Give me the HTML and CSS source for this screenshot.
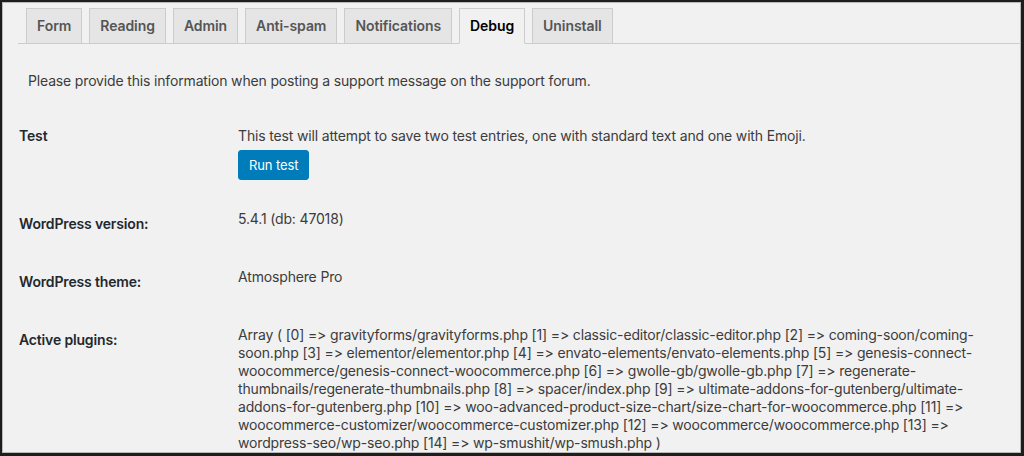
FILE: index.html
```html
<!DOCTYPE html>
<html lang="en">
<head>
  <meta charset="UTF-8" />
  <meta name="viewport" content="width=device-width, initial-scale=1.0" />
  <title>Debug</title>
  <link rel="stylesheet" href="styles.css">
</head>
<body>
  <div class="frame">
    <nav class="tabs">
      <a class="tab" href="#">Form</a>
      <a class="tab" href="#">Reading</a>
      <a class="tab" href="#">Admin</a>
      <a class="tab" href="#">Anti-spam</a>
      <a class="tab" href="#">Notifications</a>
      <a class="tab active" href="#">Debug</a>
      <a class="tab" href="#">Uninstall</a>
    </nav>

    <p class="intro">Please provide this information when posting a support message on the support forum.</p>

    <table class="debug-table">
      <tr>
        <th>Test</th>
        <td>
          <p class="test-desc">This test will attempt to save two test entries, one with standard text and one with Emoji.</p>
          <button class="btn-primary">Run test</button>
        </td>
      </tr>
      <tr>
        <th>WordPress version:</th>
        <td>5.4.1 (db: 47018)</td>
      </tr>
      <tr>
        <th>WordPress theme:</th>
        <td>Atmosphere Pro</td>
      </tr>
      <tr>
        <th>Active plugins:</th>
        <td>Array ( [0] =&gt; gravityforms/gravityforms.php [1] =&gt; classic-editor/classic-editor.php [2] =&gt; coming-soon/coming-soon.php [3] =&gt; elementor/elementor.php [4] =&gt; envato-elements/envato-elements.php [5] =&gt; genesis-connect-woocommerce/genesis-connect-woocommerce.php [6] =&gt; gwolle-gb/gwolle-gb.php [7] =&gt; regenerate-thumbnails/regenerate-thumbnails.php [8] =&gt; spacer/index.php [9] =&gt; ultimate-addons-for-gutenberg/ultimate-addons-for-gutenberg.php [10] =&gt; woo-advanced-product-size-chart/size-chart-for-woocommerce.php [11] =&gt; woocommerce-customizer/woocommerce-customizer.php [12] =&gt; woocommerce/woocommerce.php [13] =&gt; wordpress-seo/wp-seo.php [14] =&gt; wp-smushit/wp-smush.php )</td>
      </tr>
    </table>
  </div>
</body>
</html>
```

FILE: styles.css
```css
html, body {
  margin: 0;
  padding: 0;
}
body {
  font-family: Inter, "Liberation Sans", Arial, sans-serif;
  font-size: 14px;
  letter-spacing: -0.16px;
  font-variant-ligatures: none;
  font-feature-settings: "calt" 0, "liga" 0;
  color: #3c3c3c;
  background: #1d1d1d;
}
.frame {
  box-sizing: border-box;
  height: 456px;
  overflow: hidden;
  background: #f1f1f1;
  border-style: solid;
  border-color: #1d1d1d;
  border-width: 2px 3px 3px 2px;
  box-shadow: inset 0 0 0 1px #b9b9b9;
}
.tabs {
  display: flex;
  gap: 7px;
  margin-left: 16px;
  padding: 6px 0 0 8px;
  border-bottom: 1px solid #ccc;
}
.tab {
  display: block;
  padding: 5px 10px;
  line-height: 24px;
  font-weight: 600;
  letter-spacing: -0.08px;
  color: #555;
  text-decoration: none;
  background: #e5e5e5;
  border: 1px solid #ccc;
  border-bottom: none;
}
.tab.active {
  background: #f1f1f1;
  color: #000;
  border-bottom: 1px solid #f1f1f1;
  margin-bottom: -1px;
}
.intro {
  margin: 28px 0 0 26px;
  line-height: 18px;
}
.debug-table {
  border-collapse: collapse;
  margin: 17px 0 0 17px;
  width: 982px;
}
.debug-table th {
  width: 199px;
  padding: 20px 10px 20px 0;
  text-align: left;
  vertical-align: top;
  line-height: 18px;
  font-weight: 600;
  color: #23282d;
}
.debug-table td {
  padding: 15px 10px;
  vertical-align: top;
  line-height: 18px;
}
.test-desc {
  margin: 5px 0 5px;
}
.btn-primary {
  display: block;
  height: 30px;
  padding: 0 10px;
  font-family: inherit;
  font-size: 13px;
  letter-spacing: -0.1px;
  color: #fff;
  background: #007cba;
  border: 1px solid #007cba;
  border-radius: 3px;
  cursor: pointer;
}
```
